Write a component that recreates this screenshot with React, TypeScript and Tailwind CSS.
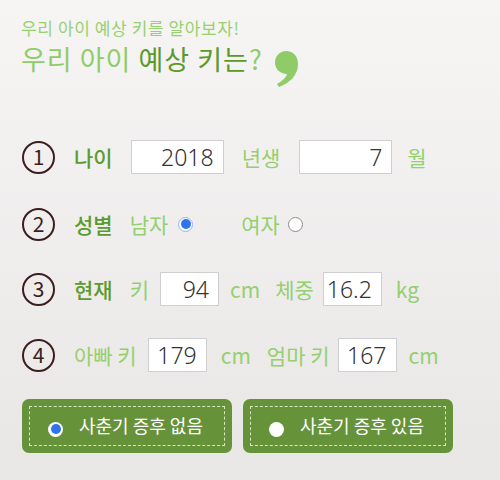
import React from "react";

const font = { fontFamily: '"Noto Sans CJK KR", "Noto Sans", sans-serif' };

function Num({ n }: { n: string }) {
  return (
    <div className="w-[33px] h-[33px] rounded-full border-[2.5px] border-[#3b1e1e] flex items-center justify-center text-[21px] leading-none text-[#3b1e1e] shrink-0">
      <span className="-mt-[1px]">{n}</span>
    </div>
  );
}

function Box({ v, w }: { v: string; w: string }) {
  return (
    <div className={`${w} h-[34px] bg-white border border-[#cfcfcf] flex items-center justify-end pr-[9px] text-[23px] text-[#333] leading-none shrink-0`} style={{ fontFamily: '"Noto Sans", "Open Sans", sans-serif', fontWeight: 300 }}>
      {v}
    </div>
  );
}

function Dark({ t, cls = "" }: { t: string; cls?: string }) {
  return <span className={`text-[21px] leading-none text-[#5c9b2d] font-medium ${cls}`}>{t}</span>;
}
function Light({ t, cls = "" }: { t: string; cls?: string }) {
  return <span className={`text-[21px] leading-none text-[#94d06f] ${cls}`}>{t}</span>;
}

export default function App() {
  return (
    <div className="w-[500px] h-[480px] overflow-hidden bg-gradient-to-b from-[#f6f5f4] to-[#e9e6e6] pl-[21px]" style={font}>
      <div className="pt-[16px]">
        <div className="text-[17px] leading-[24px] tracking-[0.6px] text-[#96d170]">우리 아이 예상 키를 알아보자!</div>
        <div className="flex items-start mt-[2px]">
          <span className="text-[27px] leading-[34px] tracking-[1px] text-[#8fcc68]">
            우리 아이 <span className="text-[#5a9a2b]">예상 키는</span>?
          </span>
          <svg width="26" height="38" viewBox="0 0 26 38" className="ml-[10px] mt-[8px]">
            <path d="M13 1 C20 1 25 6 25 14 C25 25 17 33 6 37 L4 34 C10 31 13 27 14 24 C7 24 2 19 2 12.5 C2 6 7 1 13 1 Z" fill="#8fcc68" />
          </svg>
        </div>
      </div>

      <div className="flex items-center h-[34px] mt-[52px] pl-[1px]">
        <Num n="1" />
        <Dark t="나이" cls="ml-[19px]" />
        <div className="ml-[18px]"><Box v="2018" w="w-[93px]" /></div>
        <Light t="년생" cls="ml-[18px]" />
        <div className="ml-[19px]"><Box v="7" w="w-[93px]" /></div>
        <Light t="월" cls="ml-[15px]" />
      </div>

      <div className="flex items-center h-[34px] mt-[33px] pl-[1px]">
        <Num n="2" />
        <Dark t="성별" cls="ml-[19px]" />
        <Light t="남자" cls="ml-[17px]" />
        <span className="ml-[10px] w-[15px] h-[15px] rounded-full border border-[#8fb4f5] bg-white flex items-center justify-center">
          <span className="w-[10px] h-[10px] rounded-full bg-[#2f74ec]" />
        </span>
        <Light t="여자" cls="ml-[48px]" />
        <span className="ml-[8px] w-[15px] h-[15px] rounded-full border border-[#8a8a8a] bg-white" />
      </div>

      <div className="flex items-center h-[34px] mt-[31px] pl-[1px]">
        <Num n="3" />
        <Dark t="현재" cls="ml-[19px]" />
        <Light t="키" cls="ml-[17px]" />
        <div className="ml-[11px]"><Box v="94" w="w-[59px]" /></div>
        <Light t="cm" cls="ml-[11px]" />
        <Light t="체중" cls="ml-[15px]" />
        <div className="ml-[9px]"><Box v="16.2" w="w-[59px]" /></div>
        <Light t="kg" cls="ml-[14px]" />
      </div>

      <div className="flex items-center h-[34px] mt-[32px] pl-[1px]">
        <Num n="4" />
        <Light t="아빠 키" cls="ml-[19px]" />
        <div className="ml-[11px]"><Box v="179" w="w-[59px]" /></div>
        <Light t="cm" cls="ml-[14px]" />
        <Light t="엄마 키" cls="ml-[16px]" />
        <div className="ml-[8px]"><Box v="167" w="w-[59px]" /></div>
        <Light t="cm" cls="ml-[12px]" />
      </div>

      <div className="flex mt-[27px] pl-[1px] gap-[11px]">
        <div className="w-[210px] h-[54px] rounded-[7px] bg-[#66923a] p-[7px]">
          <div className="w-full h-full border border-dashed border-[#d8e6c8] flex items-center pl-[18px]">
            <span className="w-[15px] h-[15px] mt-[6px] rounded-full bg-white flex items-center justify-center shrink-0">
              <span className="w-[10px] h-[10px] rounded-full bg-[#2f74ec]" />
            </span>
            <span className="ml-[16px] text-[18px] text-white leading-none -mt-[2px]">사춘기 증후 없음</span>
          </div>
        </div>
        <div className="w-[210px] h-[54px] rounded-[7px] bg-[#66923a] p-[7px]">
          <div className="w-full h-full border border-dashed border-[#d8e6c8] flex items-center pl-[18px]">
            <span className="w-[15px] h-[15px] mt-[6px] rounded-full bg-white shrink-0" />
            <span className="ml-[16px] text-[18px] text-white leading-none -mt-[2px]">사춘기 증후 있음</span>
          </div>
        </div>
      </div>
    </div>
  );
}
